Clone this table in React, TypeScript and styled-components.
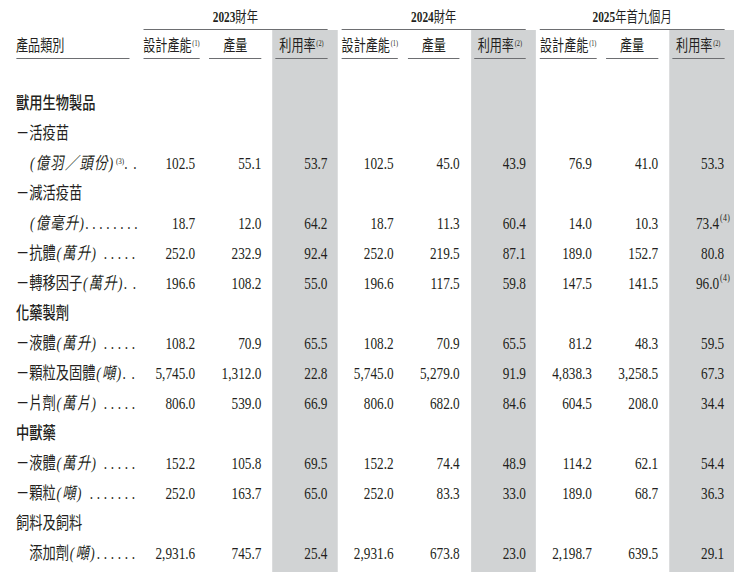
import styled, { createGlobalStyle, css } from 'styled-components';

const GlobalStyle = createGlobalStyle`
  html, body {
    margin: 0;
    padding: 0;
    background: #ffffff;
    overflow: hidden;
  }
  body {
    font-family: "Liberation Serif", "Noto Sans CJK TC", serif;
    color: #231f20;
  }
`;

const SHADE = '#d1d3d4';
const RULE = '#6d6e71';

type Item = {
  name?: string;
  unit?: string;
  note?: string;
  leader?: string;
  gap?: number;
  indent?: boolean;
  heading?: boolean;
  values?: string[];
  marks?: Record<number, string>;
};

const groups = [
  { year: '2023', rest: '財年' },
  { year: '2024', rest: '財年' },
  { year: '2025', rest: '年首九個月' },
];

const rows: Item[] = [
  { name: '獸用生物製品', heading: true },
  { name: '－活疫苗' },
  {
    unit: '億羽／頭份', note: '(3)', leader: '..', gap: 7.3, indent: true,
    values: ['102.5', '55.1', '53.7', '102.5', '45.0', '43.9', '76.9', '41.0', '53.3'],
  },
  { name: '－減活疫苗' },
  {
    unit: '億毫升', leader: '........', indent: true,
    values: ['18.7', '12.0', '64.2', '18.7', '11.3', '60.4', '14.0', '10.3', '73.4'],
    marks: { 8: '(4)' },
  },
  {
    name: '－抗體', unit: '萬升', leader: '.....',
    values: ['252.0', '232.9', '92.4', '252.0', '219.5', '87.1', '189.0', '152.7', '80.8'],
  },
  {
    name: '－轉移因子', unit: '萬升', leader: '..', gap: 7.3,
    values: ['196.6', '108.2', '55.0', '196.6', '117.5', '59.8', '147.5', '141.5', '96.0'],
    marks: { 8: '(4)' },
  },
  { name: '化藥製劑', heading: true },
  {
    name: '－液體', unit: '萬升', leader: '.....',
    values: ['108.2', '70.9', '65.5', '108.2', '70.9', '65.5', '81.2', '48.3', '59.5'],
  },
  {
    name: '－顆粒及固體', unit: '噸', leader: '..', gap: 7.3,
    values: ['5,745.0', '1,312.0', '22.8', '5,745.0', '5,279.0', '91.9', '4,838.3', '3,258.5', '67.3'],
  },
  {
    name: '－片劑', unit: '萬片', leader: '.....',
    values: ['806.0', '539.0', '66.9', '806.0', '682.0', '84.6', '604.5', '208.0', '34.4'],
  },
  { name: '中獸藥', heading: true },
  {
    name: '－液體', unit: '萬升', leader: '.....',
    values: ['152.2', '105.8', '69.5', '152.2', '74.4', '48.9', '114.2', '62.1', '54.4'],
  },
  {
    name: '－顆粒', unit: '噸', leader: '.......',
    values: ['252.0', '163.7', '65.0', '252.0', '83.3', '33.0', '189.0', '68.7', '36.3'],
  },
  { name: '飼料及飼料' },
  {
    name: '添加劑', unit: '噸', leader: '......', indent: true,
    values: ['2,931.6', '745.7', '25.4', '2,931.6', '673.8', '23.0', '2,198.7', '639.5', '29.1'],
  },
];

const subHeads = ['設計產能', '產量', '利用率'];
const subNotes = ['(1)', '', '(2)'];
const NINE = Array.from({ length: 9 }, (_, i) => i);
const isShaded = (i: number) => i % 3 === 2;

export default function App() {
  return (
    <>
      <GlobalStyle />
      <Frame>
        <Sheet>
          <Line $h={30}>
            <div />
            {groups.map((g) => (
              <GroupTitle key={g.year}>
                <Year>{g.year}</Year>
                {g.rest}
              </GroupTitle>
            ))}
          </Line>

          <Line $h={29}>
            <HeadCell>
              <HeadLabel $align="left">產品類別</HeadLabel>
            </HeadCell>
            {NINE.map((i) => (
              <HeadCell key={i} $shade={isShaded(i)}>
                <HeadLabel>
                  {subHeads[i % 3]}
                  {subNotes[i % 3] && <HeadSup>{subNotes[i % 3]}</HeadSup>}
                </HeadLabel>
              </HeadCell>
            ))}
          </Line>

          <Line $h={30}>
            <div />
            {NINE.map((i) => (
              <Cell key={i} $shade={isShaded(i)} />
            ))}
          </Line>

          {rows.map((r, idx) => (
            <Line $h={30} key={idx}>
              <Label $indent={r.indent} $heading={r.heading}>
                <span>
                  {r.name}
                  {r.unit && <Unit>({r.unit})</Unit>}
                  {r.note && <NoteSup>{r.note}</NoteSup>}
                </span>
                {r.leader && <Leader $gap={r.gap ?? 4.7}>{r.leader}</Leader>}
              </Label>
              {NINE.map((i) => (
                <Cell key={i} $shade={isShaded(i)}>
                  {r.values?.[i]}
                  {r.marks?.[i] && <Mark>{r.marks[i]}</Mark>}
                </Cell>
              ))}
            </Line>
          ))}

          <Line $h={3}>
            <div />
            {NINE.map((i) => (
              <Cell key={i} $shade={isShaded(i)} />
            ))}
          </Line>
        </Sheet>
      </Frame>
    </>
  );
}

const shadeCss = css`
  background: ${SHADE};
  margin: 0 -12.8px 0 -3.85px;
  padding: 0 12.8px 0 3.85px;
`;

const Frame = styled.div`
  width: 751px;
  height: 576px;
  overflow: hidden;
`;

// the print uses a condensed face, so the whole sheet is squeezed sideways
const Sheet = styled.div`
  width: 963px;
  padding-left: 20.5px;
  box-sizing: border-box;
  transform: scaleX(0.78);
  transform-origin: 0 0;
`;

const Line = styled.div<{ $h: number }>`
  display: grid;
  grid-template-columns: 145px repeat(9, 66.7px);
  column-gap: 18.1px;
  height: ${(p) => p.$h}px;
`;

const GroupTitle = styled.div`
  grid-column: span 3;
  box-sizing: border-box;
  height: 30px;
  padding-top: 8px;
  border-bottom: 1px solid ${RULE};
  font-size: 14.5px;
  line-height: 18px;
  text-align: center;
  white-space: nowrap;
`;

const Year = styled.span`
  font-weight: 700;
`;

const HeadCell = styled.div<{ $shade?: boolean }>`
  display: flex;
  align-items: flex-end;
  ${(p) => p.$shade && shadeCss}
`;

const HeadLabel = styled.div<{ $align?: 'left' | 'center' }>`
  flex: 1;
  padding-bottom: 3px;
  border-bottom: 1px solid ${RULE};
  font-size: 15.5px;
  line-height: 18px;
  text-align: ${(p) => p.$align ?? 'center'};
  white-space: nowrap;
`;

const HeadSup = styled.sup`
  font-size: 8px;
  line-height: 0;
  vertical-align: 0.6em;
  margin-left: 1px;
`;

const Cell = styled.div<{ $shade?: boolean }>`
  font-size: 17px;
  line-height: 30px;
  text-align: right;
  white-space: nowrap;
  ${(p) => p.$shade && shadeCss}
`;

const Label = styled.div<{ $indent?: boolean; $heading?: boolean }>`
  display: flex;
  padding-left: ${(p) => (p.$indent ? '17px' : '0')};
  font-size: 17px;
  font-weight: ${(p) => (p.$heading ? 500 : 400)};
  line-height: 30px;
  white-space: nowrap;
`;

const Unit = styled.span`
  font-style: italic;
  letter-spacing: 0.1em;
  margin-left: 1px;
`;

const NoteSup = styled.sup`
  font-size: 9px;
  line-height: 0;
  vertical-align: 0.6em;
  margin-left: 2px;
`;

const Leader = styled.span<{ $gap: number }>`
  margin-left: auto;
  margin-right: -12.3px;
  letter-spacing: ${(p) => p.$gap}px;
`;

const Mark = styled.sup`
  font-size: 10px;
  line-height: 0;
  vertical-align: 0.8em;
  letter-spacing: 0.5px;
  margin-left: 1px;
  margin-right: -7.7px;
`;
